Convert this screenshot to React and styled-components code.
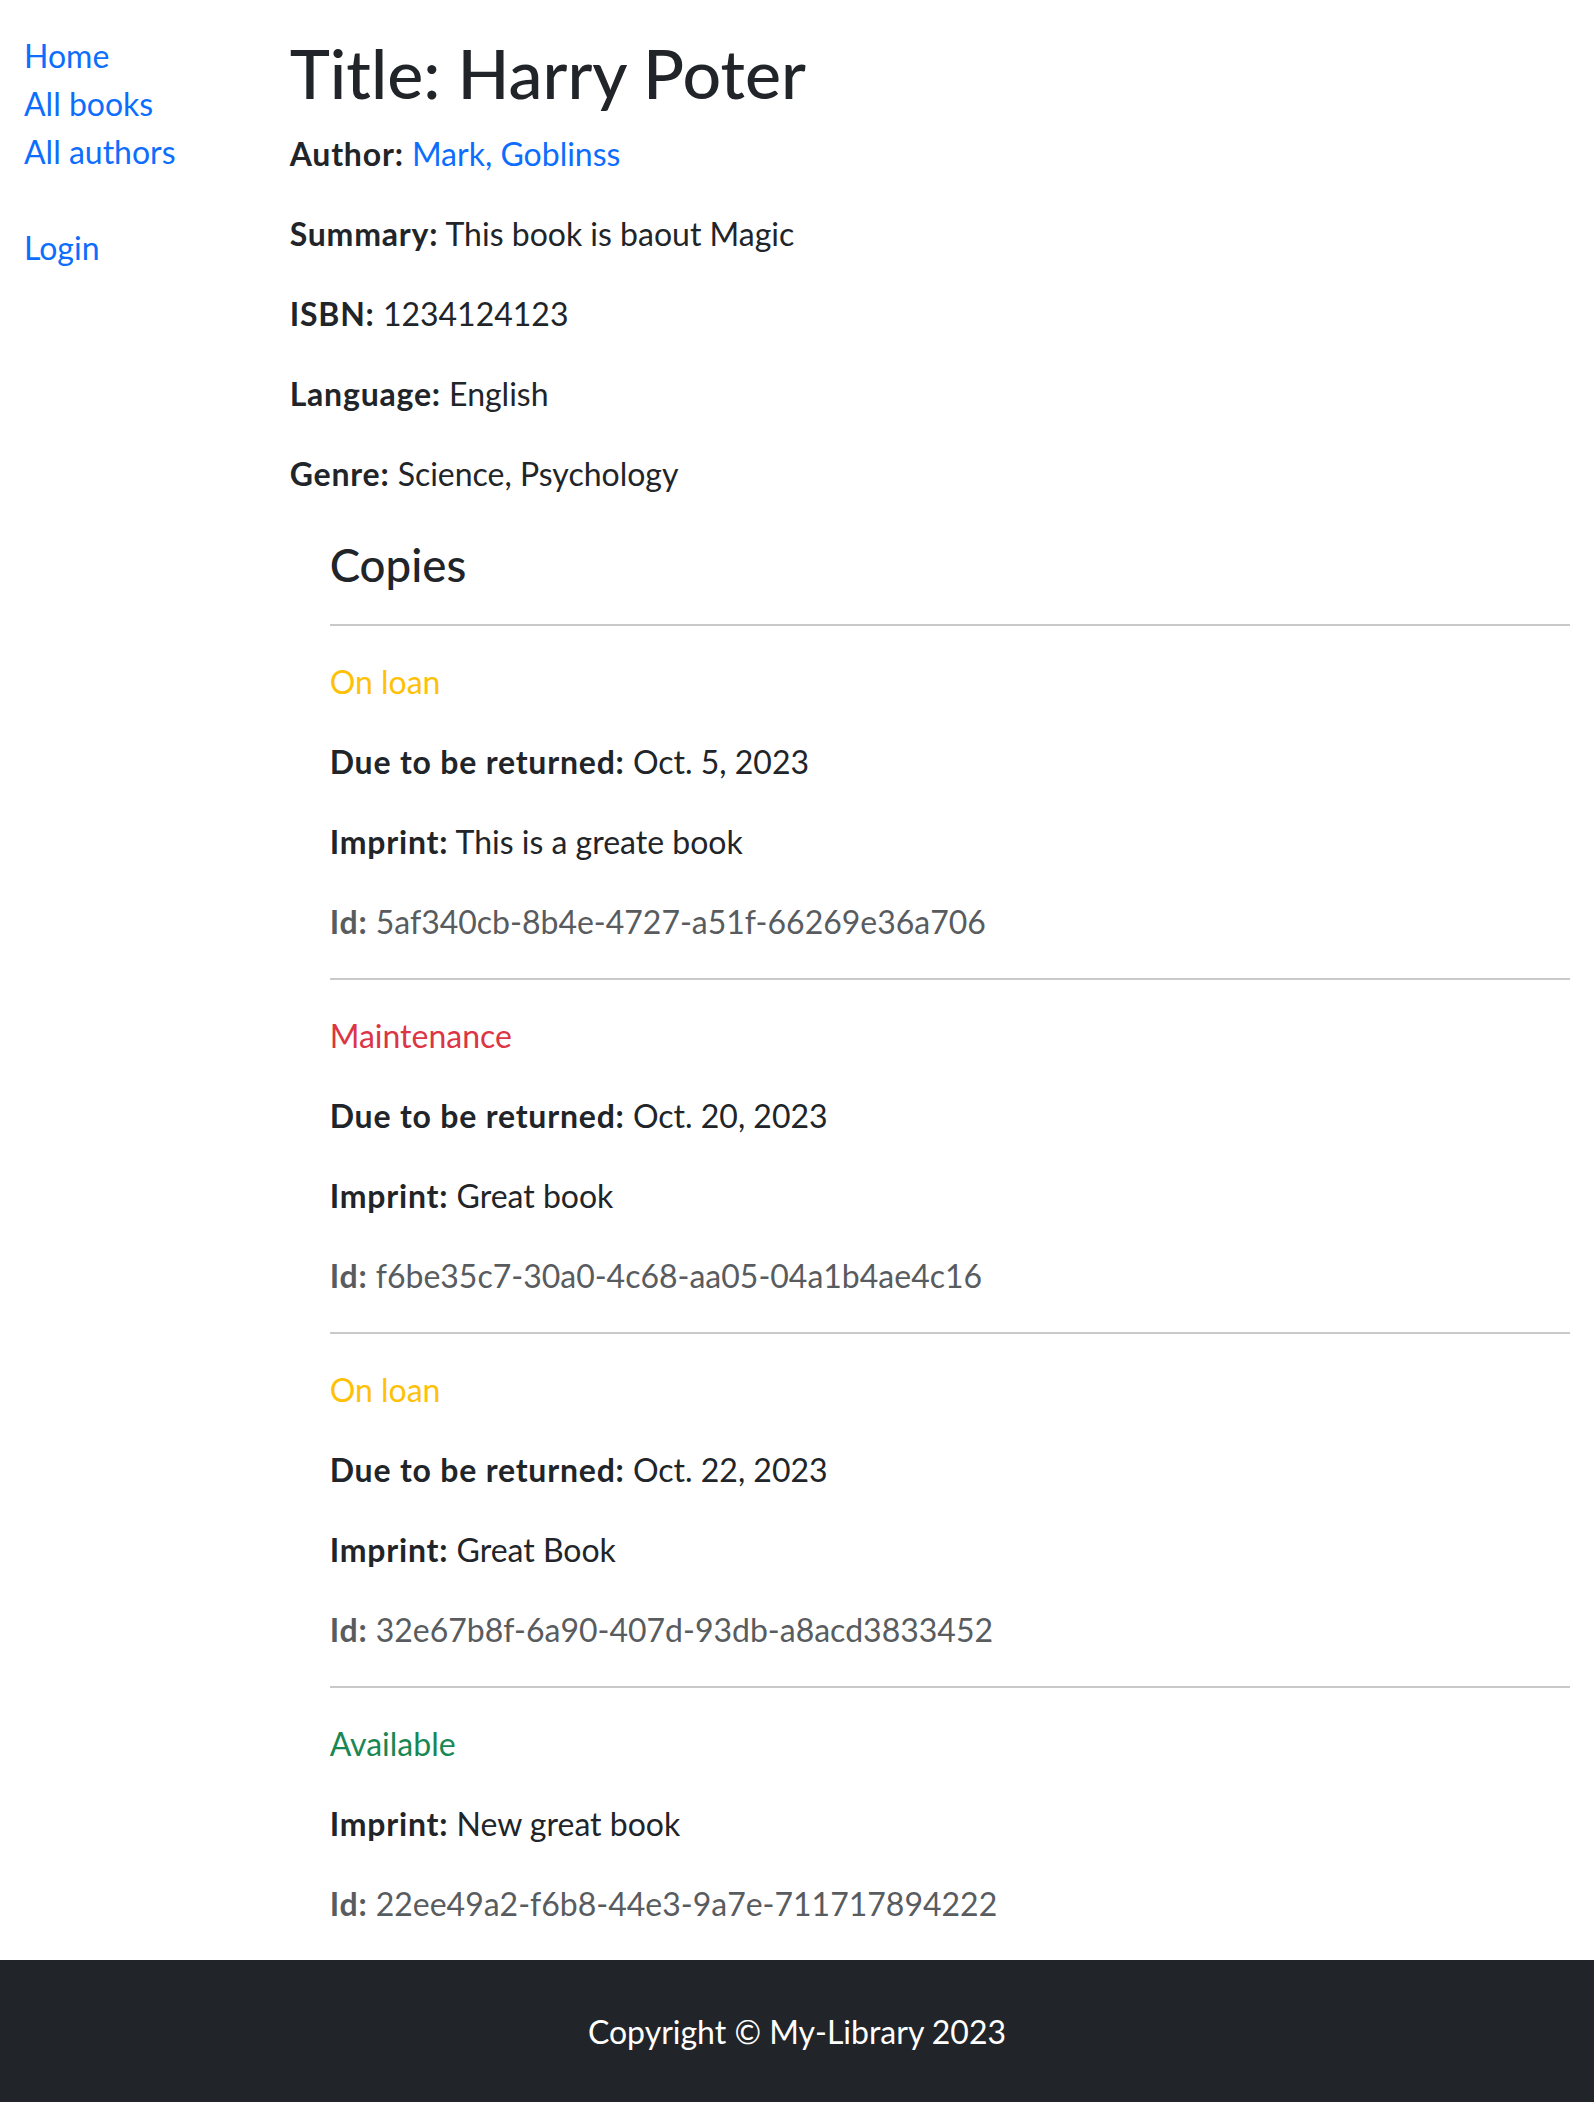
import React from "react";
import styled, { createGlobalStyle } from "styled-components";

const GlobalStyle = createGlobalStyle`
	*, *::before, *::after {
		box-sizing: border-box;
	}

	body {
		margin: 0;
		font-family: Lato, "Noto Sans", "Liberation Sans", sans-serif;
		font-size: 32px;
		line-height: 1.5;
		color: #212529;
		background: #fff;
	}
`;

const Page = styled.div`
	padding-top: 32px;
`;

const Row = styled.div`
	display: grid;
	grid-template-columns: 16.6667% 83.3333%;
`;

const Sidebar = styled.div`
	padding: 0 24px;
`;

const Main = styled.div`
	padding: 0 24px;
`;

const NavList = styled.ul`
	list-style: none;
	margin: ${({ $spaced }) => ($spaced ? "48px 0 0" : "0")};
	padding: 0;
`;

const NavLink = styled.a`
	color: #0d6efd;
	text-decoration: none;
`;

const Title = styled.h1`
	margin: 0 0 16px;
	font-size: 68px;
	font-weight: 500;
	line-height: 1.2;
`;

const Field = styled.p`
	margin: 0 0 32px;
	color: ${({ $tone }) => tones[$tone] || "inherit"};
`;

const Label = styled.strong`
	font-weight: 700;
	letter-spacing: 0.025em;
`;

const Copies = styled.div`
	margin-top: 40px;
	margin-left: 40px;
`;

const CopiesTitle = styled.h4`
	margin: 0 0 16px;
	font-size: 45.6px;
	font-weight: 500;
	line-height: 1.2;
`;

const Divider = styled.hr`
	margin: 32px 0;
	border: 0;
	border-top: 2px solid #c8c9ca;
`;

const Footer = styled.footer`
	background: #212529;
	color: #fff;
	text-align: center;
	padding: 48px 0;
`;

const tones = {
	warning: "#ffc107",
	danger: "#dc3545",
	success: "#198754",
	muted: "#595c5f",
};

const statusTone = {
	"On loan": "warning",
	"Maintenance": "danger",
	"Available": "success",
};

const book = {
	title: "Harry Poter",
	author: "Mark, Goblinss",
	summary: "This book is baout Magic",
	isbn: "1234124123",
	language: "English",
	genre: "Science, Psychology",
};

const copies = [
	{ status: "On loan", due: "Oct. 5, 2023", imprint: "This is a greate book", id: "5af340cb-8b4e-4727-a51f-66269e36a706" },
	{ status: "Maintenance", due: "Oct. 20, 2023", imprint: "Great book", id: "f6be35c7-30a0-4c68-aa05-04a1b4ae4c16" },
	{ status: "On loan", due: "Oct. 22, 2023", imprint: "Great Book", id: "32e67b8f-6a90-407d-93db-a8acd3833452" },
	{ status: "Available", imprint: "New great book", id: "22ee49a2-f6b8-44e3-9a7e-711717894222" },
];

const App = () => {
	return (
		<>
			<GlobalStyle />
			<Page>
				<Row>
					<Sidebar>
						<NavList>
							<li><NavLink href="#">Home</NavLink></li>
							<li><NavLink href="#">All books</NavLink></li>
							<li><NavLink href="#">All authors</NavLink></li>
						</NavList>
						<NavList $spaced>
							<li><NavLink href="#">Login</NavLink></li>
						</NavList>
					</Sidebar>
					<Main>
						<Title>Title: {book.title}</Title>
						<Field><Label>Author:</Label> <NavLink href="#">{book.author}</NavLink></Field>
						<Field><Label>Summary:</Label> {book.summary}</Field>
						<Field><Label>ISBN:</Label> {book.isbn}</Field>
						<Field><Label>Language:</Label> {book.language}</Field>
						<Field><Label>Genre:</Label> {book.genre}</Field>
						<Copies>
							<CopiesTitle>Copies</CopiesTitle>
							{copies.map((copy) => (
								<React.Fragment key={copy.id}>
									<Divider />
									<Field $tone={statusTone[copy.status]}>{copy.status}</Field>
									{copy.due && <Field><Label>Due to be returned:</Label> {copy.due}</Field>}
									<Field><Label>Imprint:</Label> {copy.imprint}</Field>
									<Field $tone="muted"><Label>Id:</Label> {copy.id}</Field>
								</React.Fragment>
							))}
						</Copies>
					</Main>
				</Row>
			</Page>
			<Footer>Copyright © My-Library 2023</Footer>
		</>
	);
}

export default App;
